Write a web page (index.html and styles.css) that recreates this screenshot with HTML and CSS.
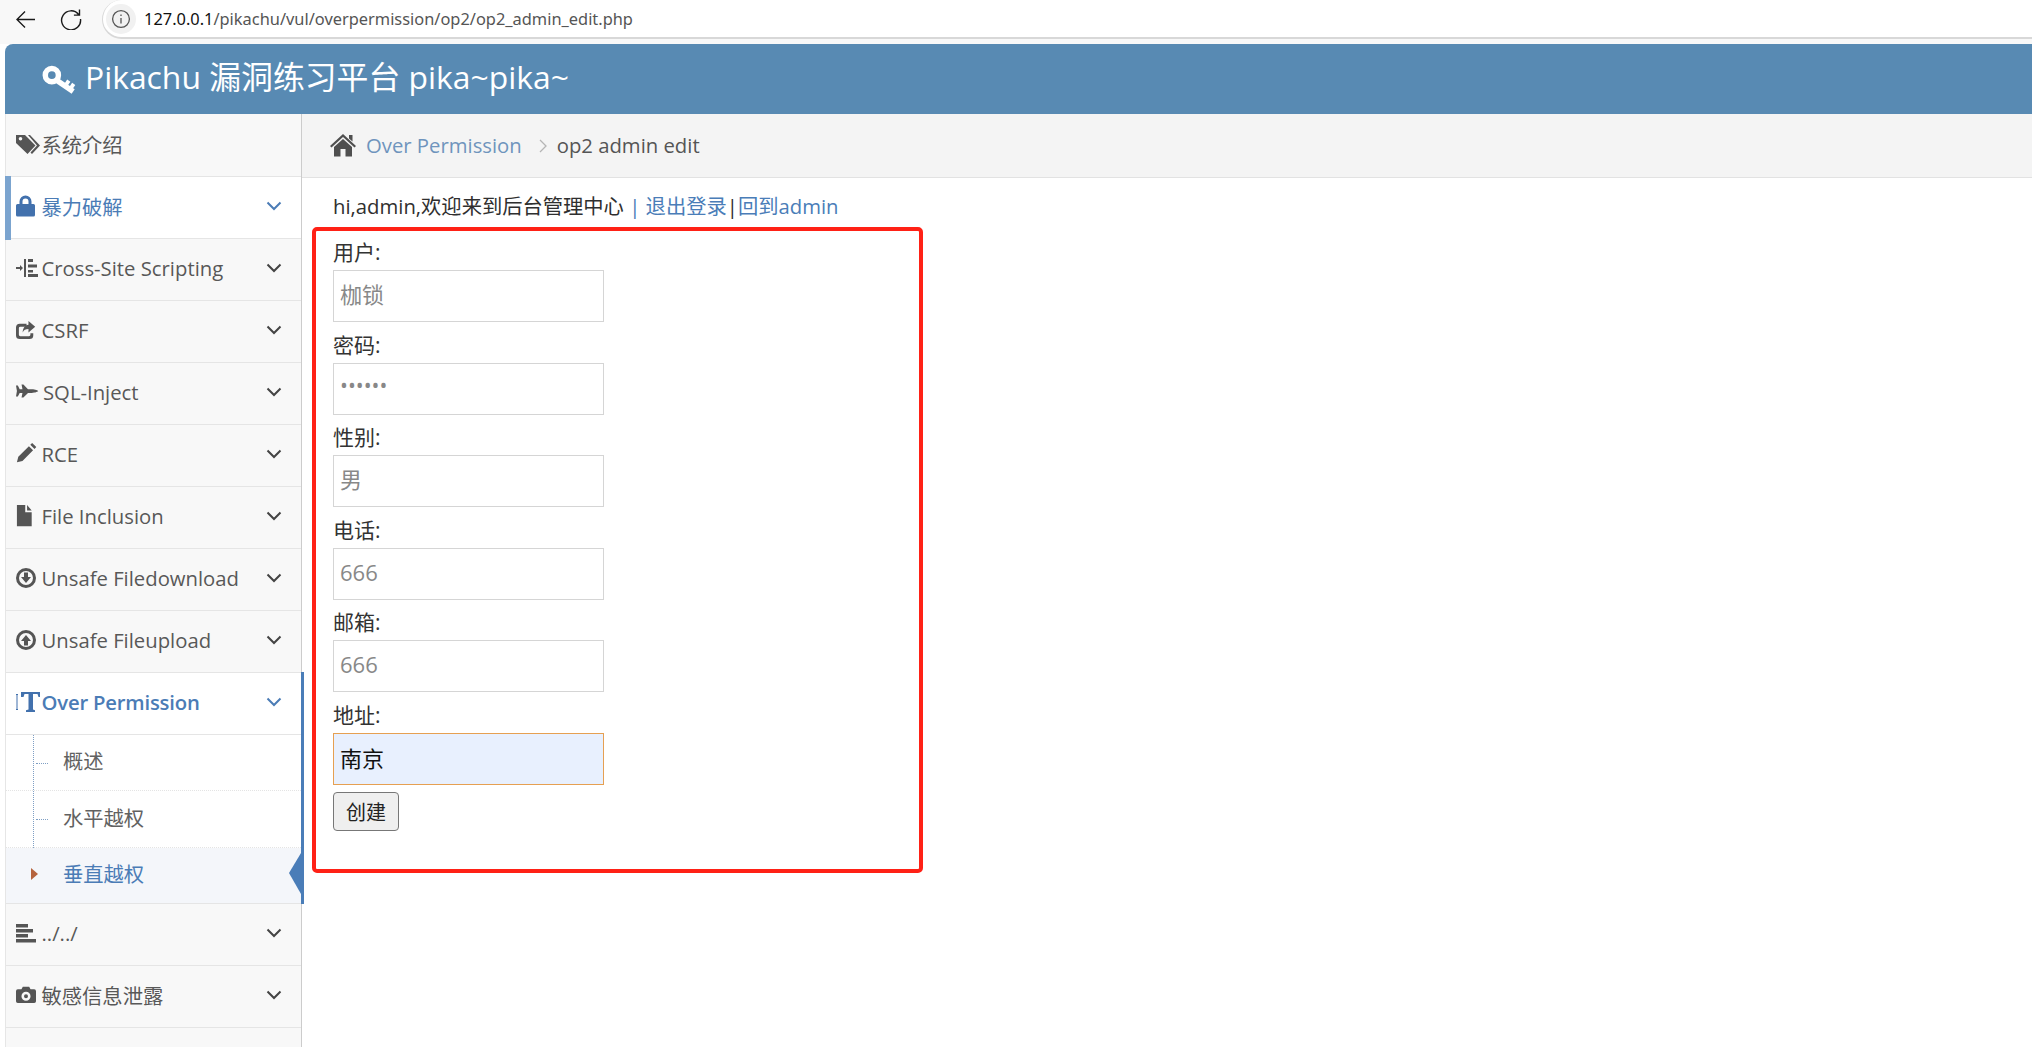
FILE: index.html
```html
<!DOCTYPE html>
<html lang="zh">
<head>
<meta charset="utf-8">
<title>op2 admin edit</title>
<link rel="stylesheet" href="styles.css">
</head>
<body>
<div class="chrome">
  <svg class="nav-back" viewBox="0 0 22 20"><path d="M21 10H2M10.5 1.500 2 10l8.500 8.500"/></svg>
  <svg class="nav-reload" viewBox="0 0 22 22"><path d="M18.600 6.500A9.500 9.500 0 1 0 20.500 11M19.500 1.500v5.600h-5.600"/></svg>
  <div class="omnibox">
    <span class="info-chip"><svg viewBox="0 0 20 20"><circle cx="10" cy="10" r="8.400"/><path d="M10 9v5.500M10 5.400v1.600"/></svg></span>
    <span class="url"><b>127.0.0.1</b>/pikachu/vul/overpermission/op2/op2_admin_edit.php</span>
  </div>
</div>
<div class="app">
  <header class="brand">
    <svg class="brand-key" viewBox="0 0 32 28"><circle cx="9" cy="10" r="6"/><path d="M13 14.500 28.500 25"/><path class="teeth" d="M21.500 19.500l3-4.500M26 22.500l3-4.500"/></svg>
    <span class="brand-title">Pikachu 漏洞练习平台 pika~pika~</span>
  </header>
  <div class="main">
    <nav class="sidebar">
      <a class="item first">
        <svg class="ico" viewBox="0 0 24 20"><path d="M0 1h9l10.500 10.500-8 8.500L0 9ZM4.500 3a1.800 1.800 0 1 0 0 3.600A1.800 1.800 0 0 0 4.500 3Z" fill-rule="evenodd"/><path d="M12 1h2l10 10.500-8 8.500-1.500-1.500 6.500-7Z"/></svg>
        <span class="label">系统介绍</span>
      </a>
      <a class="item open">
        <svg class="ico" viewBox="0 0 24 24"><path fill-rule="evenodd" d="M3.500 10V7.500a6 6 0 0 1 12 0V10h2a1.500 1.500 0 0 1 1.500 1.500V21a1.500 1.500 0 0 1-1.500 1.500h-16A1.500 1.500 0 0 1 0 21v-9.500A1.500 1.500 0 0 1 1.500 10Zm3 0h6V7.500a3 3 0 0 0-6 0Z"/></svg>
        <span class="label">暴力破解</span>
        <svg class="chev" viewBox="0 0 16 10"><path d="M1.500 1.500 8 8l6.500-6.500"/></svg>
      </a>
      <a class="item">
        <svg class="ico" viewBox="0 0 24 20"><path d="M0 9h4V7l3 3-3 3v-2H0ZM8 1h2v18H8ZM12 1h5v3h-5ZM12 6.500h9v3h-9ZM12 12h5v2.500h-5ZM12 16h10v3H12Z"/></svg>
        <span class="label">Cross-Site Scripting</span>
        <svg class="chev" viewBox="0 0 16 10"><path d="M1.500 1.500 8 8l6.500-6.500"/></svg>
      </a>
      <a class="item">
        <svg class="ico" viewBox="1 -3 25 25"><path d="M5 3h7v3H5.500A1.500 1.500 0 0 0 4 7.500v7A1.500 1.500 0 0 0 5.500 16h9a1.500 1.500 0 0 0 1.500-1.500V13h3v2a4 4 0 0 1-4 4H5a4 4 0 0 1-4-4V7a4 4 0 0 1 4-4Z"/><path d="M14 0l7 6-7 6V8.500c-3 0-5 1-6 3.500 0-4 2-7.500 6-8Z"/></svg>
        <span class="label">CSRF</span>
        <svg class="chev" viewBox="0 0 16 10"><path d="M1.500 1.500 8 8l6.500-6.500"/></svg>
      </a>
      <a class="item">
        <svg class="ico" viewBox="0 -4 26 26"><path d="M0 2h2l2 4h3L6 1h2l5 5h4c4 0 7 1.500 7 2s-3 2-7 2h-4l-5 5H6l1-5H4l-2 4H0l1-6Z"/></svg>
        <span class="label shift">SQL-Inject</span>
        <svg class="chev" viewBox="0 0 16 10"><path d="M1.500 1.500 8 8l6.500-6.500"/></svg>
      </a>
      <a class="item">
        <svg class="ico" viewBox="0 -1 26 26"><path d="M1 21l1.500-6L14 3.500l4.500 4.500L7 19.500ZM15.500 2l2-2L22 4.500l-2 2Z"/></svg>
        <span class="label">RCE</span>
        <svg class="chev" viewBox="0 0 16 10"><path d="M1.500 1.500 8 8l6.500-6.500"/></svg>
      </a>
      <a class="item">
        <svg class="ico" viewBox="2 -1 26 26"><path d="M3 0h9v8h7v15H3ZM14 0l5 6h-5Z"/></svg>
        <span class="label">File Inclusion</span>
        <svg class="chev" viewBox="0 0 16 10"><path d="M1.500 1.500 8 8l6.500-6.500"/></svg>
      </a>
      <a class="item">
        <svg class="ico" viewBox="1 -1 24 24"><path fill-rule="evenodd" d="M11 1a10 10 0 1 1 0 20 10 10 0 0 1 0-20Zm0 3a7 7 0 1 0 0 14 7 7 0 0 0 0-14Z"/><path d="M9 5.500h4V10h3l-5 6-5-6h3Z"/></svg>
        <span class="label">Unsafe Filedownload</span>
        <svg class="chev" viewBox="0 0 16 10"><path d="M1.500 1.500 8 8l6.500-6.500"/></svg>
      </a>
      <a class="item">
        <svg class="ico" viewBox="1 -1 24 24"><path fill-rule="evenodd" d="M11 1a10 10 0 1 1 0 20 10 10 0 0 1 0-20Zm0 3a7 7 0 1 0 0 14 7 7 0 0 0 0-14Z"/><path d="M9 16.500h4V12h3l-5-6-5 6h3Z"/></svg>
        <span class="label">Unsafe Fileupload</span>
        <svg class="chev" viewBox="0 0 16 10"><path d="M1.500 1.500 8 8l6.500-6.500"/></svg>
      </a>
      <div class="group">
        <a class="item open current">
          <svg class="ico" viewBox="0 0 24 20"><path d="M0 2h2v1H1.500v14H2v1H0v-1h.5V3H0ZM5 0h19v5h-1.500l-1-3H17v15.500l2 .8V20H10v-1.700l2.500-.8V2H8.500l-1 3H5Z"/></svg>
          <span class="label strong">Over Permission</span>
          <svg class="chev" viewBox="0 0 16 10"><path d="M1.500 1.500 8 8l6.500-6.500"/></svg>
        </a>
        <ul class="submenu">
          <li class="sub"><span class="tick"></span>概述</li>
          <li class="sub"><span class="tick"></span>水平越权</li>
          <li class="sub active"><span class="caret"></span>垂直越权</li>
        </ul>
      </div>
      <a class="item">
        <svg class="ico" viewBox="0 -2 24 24"><path d="M0 1h12v3.500H0ZM0 6h17v3.500H0ZM0 11h12v3.500H0ZM0 16h20v3.500H0Z"/></svg>
        <span class="label">../../</span>
        <svg class="chev" viewBox="0 0 16 10"><path d="M1.500 1.500 8 8l6.500-6.500"/></svg>
      </a>
      <a class="item">
        <svg class="ico" viewBox="0 -4 26.400 26.400"><path fill-rule="evenodd" d="M2 3h4l1.500-3h7L16 3h4a2 2 0 0 1 2 2v11a2 2 0 0 1-2 2H2a2 2 0 0 1-2-2V5a2 2 0 0 1 2-2Zm9 2.500a5 5 0 1 0 0 10 5 5 0 0 0 0-10Zm0 2.800a2.200 2.200 0 1 1 0 4.400 2.200 2.200 0 0 1 0-4.400Z"/></svg>
        <span class="label">敏感信息泄露</span>
        <svg class="chev" viewBox="0 0 16 10"><path d="M1.500 1.500 8 8l6.500-6.500"/></svg>
      </a>
    </nav>
    <main class="content">
      <div class="crumbs">
        <svg class="home" viewBox="0 0 28 24"><path d="M14 1 27 13l-1.500 1.600L14 4 2.500 14.600 1 13Z"/><path d="M20 2h3.500v6.500L20 5.500ZM14 6l9 8v9.500h-6.500V16h-5v7.500H5V14Z"/></svg>
        <a class="crumb-link">Over Permission</a>
        <svg class="crumb-sep" viewBox="0 0 8 14"><path d="M1 1l6 6-6 6"/></svg>
        <span class="crumb-here">op2 admin edit</span>
      </div>
      <p class="greeting">hi,admin,欢迎来到后台管理中心 <span class="bar">|</span> <a>退出登录</a>|<a>回到admin</a></p>
      <form class="edit-form">
        <div class="field"><label>用户:</label><input type="text" placeholder="枷锁"></div>
        <div class="field"><label>密码:</label><input class="pw" type="password" value="666666"></div>
        <div class="field"><label>性别:</label><input type="text" placeholder="男"></div>
        <div class="field"><label>电话:</label><input type="text" placeholder="666"></div>
        <div class="field"><label>邮箱:</label><input type="text" placeholder="666"></div>
        <div class="field"><label>地址:</label><input class="filled" type="text" value="南京"></div>
        <button class="submit" type="button">创建</button>
      </form>
    </main>
  </div>
</div>
</body>
</html>
```
FILE: styles.css
```css
* { box-sizing: border-box; }
html, body { margin: 0; height: 100%; overflow: hidden; background: #fff; }
body { font-family: "Open Sans", "Noto Sans CJK SC", sans-serif; font-size: 20.3px; color: #393939; }

.chrome { height: 44px; background: #f8f8f8; display: flex; align-items: flex-start; }
.nav-back { width: 21px; height: 19px; margin: 9.5px 0 0 15px; fill: none; stroke: #1a1a1a; stroke-width: 1.4; flex: none; }
.nav-reload { width: 22px; height: 22px; margin: 8px 0 0 24px; fill: none; stroke: #1a1a1a; stroke-width: 1.4; flex: none; }
.omnibox { flex: 1; height: 39px; margin-left: 20px; background: #fff; border: 1px solid #d8d8d8; border-width: 0 0 2px 1px; border-radius: 20px 0 0 20px; display: flex; align-items: center; }
.info-chip { width: 30px; height: 30px; margin: 0 0 0 3px; border-radius: 50%; background: #f1f1f1; display: flex; align-items: center; justify-content: center; }
.info-chip svg { width: 20px; height: 20px; fill: none; stroke: #555; stroke-width: 1.3; }
.url { margin-left: 8px; font-family: "Noto Sans", sans-serif; font-size: 16.4px; color: #555; white-space: nowrap; }
.url b { font-weight: 400; color: #111; }

.app { padding-left: 5px; }
.brand { height: 70px; background: #588ab3; border-radius: 8px 0 0 0; color: #fff; display: flex; align-items: center; padding-left: 37px; }
.brand-key { width: 35px; height: 31px; fill: none; stroke: #fff; stroke-width: 5; flex: none; margin-right: 8px; }
.brand-key .teeth { stroke-width: 3.5; }
.brand-title { font-size: 31.85px; line-height: 40px; white-space: nowrap; position: relative; top: -2px; }

.main { display: flex; height: 933px; }
.sidebar { width: 297px; flex: none; background: #f8f8f8; border-left: 1px solid #e6e6e6; border-right: 1px solid #ccc; }
.item { display: flex; align-items: center; height: 62px; border-bottom: 1px solid #e5e5e5; padding: 0 19px 3px 10px; color: #585858; white-space: nowrap; position: relative; }
.item.first { height: 63px; }
.ico { width: 24px; height: 24px; flex: none; fill: #555; margin-right: 1.5px; }
.label { flex: 1; }
.label.shift { margin-left: 1.5px; }
.label.strong { font-weight: 600; letter-spacing: -.2px; }
.chev { width: 16px; height: 10px; flex: none; fill: none; stroke: #444; stroke-width: 2; }
.item.open { background: #fff; color: #4b7cb6; }
.item.open .ico { fill: #4271ad; }
.item.open .chev { stroke: #4b7cb6; }
.item.open:not(.current)::before { content: ""; position: absolute; left: -1px; top: -1px; bottom: -2px; width: 6px; background: #7ba4cf; }

.group { position: relative; background: #fff; }
.group::after { content: ""; position: absolute; right: -3px; top: -1px; bottom: 0; width: 3px; background: #4a7db8; }
.submenu { list-style: none; margin: 0; padding: 0; position: relative; }
.submenu::before { content: ""; position: absolute; left: 27px; top: 0; bottom: 0; border-left: 1px dotted #7f9fc4; }
.sub { height: 56px; display: flex; align-items: center; padding: 0 0 2px 57px; color: #616161; border-bottom: 1px dotted #e4e4e4; position: relative; line-height: 1; }
.sub:nth-child(2) { height: 57px; }
.sub:last-child { border-bottom: 1px solid #e5e5e5; }
.tick { position: absolute; left: 30px; top: 50%; width: 12px; border-top: 1px dotted #7f9fc4; }
.sub.active { background: #f4f6fa; color: #4b7cb6; }
.caret { position: absolute; left: 25px; top: 20px; width: 0; height: 0; border-style: solid; border-width: 6px 0 6px 7px; border-color: transparent transparent transparent #b5633d; z-index: 1; }
.sub.active::after { content: ""; position: absolute; right: 0; top: 5px; width: 0; height: 0; border-style: solid; border-width: 20px 12px 21px 0; border-color: transparent #4a7db8 transparent transparent; }

.content { flex: 1; min-width: 0; }
.crumbs { height: 64px; background: #f4f4f4; border-bottom: 1px solid #e2e2e2; display: flex; align-items: center; padding: 0 0 2px 27px; white-space: nowrap; }
.home { width: 28px; height: 24px; fill: #4f4f4f; flex: none; margin-right: 9px; position: relative; }
.crumb-link { color: #6f94bd; }
.crumb-sep { width: 8px; height: 14px; fill: none; stroke: #b5b5b5; stroke-width: 1.3; margin: 2px 10px 0 17px; flex: none; }
.crumb-here { color: #555; }
.greeting { margin: 13px 0 6px 31px; line-height: 30px; white-space: nowrap; color: #2f2f2f; height: 30px; }
.greeting a { color: #4a7db8; }
.greeting .bar { color: #4a7db8; }
.edit-form { margin: 0 0 0 10px; width: 611px; height: 646px; border: 4px solid #ff2116; border-radius: 5px; padding: 0 0 0 17px; }
.field label { display: block; line-height: 30px; padding-top: 6px; margin-bottom: 3px; height: 36px; color: #333; font-size: 21px; }
.field input { display: block; width: 271px; height: 52px; margin-bottom: 1.6px; padding: 0 6px 4px; border: 1.5px solid #d5d5d5; border-radius: 0; font: inherit; font-size: 22px; color: #888; background: #fff; outline: none; }
.field input::placeholder { color: #888; opacity: 1; }
.field input.pw { font-size: 21px; padding-bottom: 7px; color: #888; }
.field input.filled { color: #111; background: #e8f0fe; border-color: #e6a052; }
.submit { display: block; width: 66px; height: 39px; margin-top: 7.5px; padding: 0; border: 1.5px solid #777; border-radius: 4px; background: #efefef; color: #222; font: inherit; font-size: 20px; }
```
